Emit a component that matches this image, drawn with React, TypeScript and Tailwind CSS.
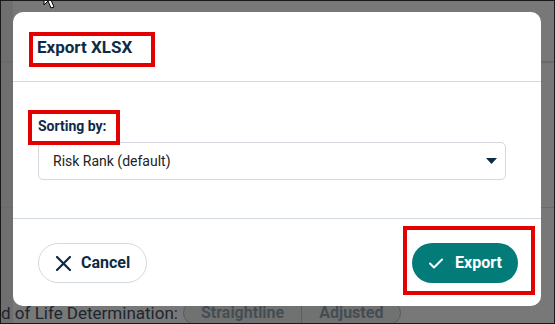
const App = () => {
  return (
    <div className="relative w-[555px] h-[324px] overflow-hidden bg-[#787878] border border-[#1a1a1a] font-['Roboto',sans-serif]">
      {/* page behind the modal, dimmed */}
      <div className="absolute left-0 top-0 w-[12px] h-full bg-[#6f6f6f]" />
      <div className="absolute left-0 right-0 top-[60px] h-[2px] bg-[#6a6a6a]" />
      <div className="absolute left-0 right-0 top-[206px] h-[1px] bg-[#6a6a6a]" />
      <div className="absolute left-0 bottom-0 flex items-center gap-[5px] h-[20px]">
        <span className="text-[17px] leading-none text-[#1c262e] whitespace-nowrap">
          d of Life Determination:
        </span>
        <div className="flex items-center h-[24px] rounded-full border border-[#56605f] bg-[#707272] text-[#454d53] font-bold text-[16px] leading-none">
          <span className="pl-[17px] pr-[17px]">Straightline</span>
          <span className="w-px h-full bg-[#56605f]" />
          <span className="px-[17px]">Adjusted</span>
        </div>
      </div>

      {/* mouse cursor */}
      <svg className="absolute left-[40px] top-[-12px]" width="18" height="22" viewBox="0 0 18 22">
        <path d="M3 1 L3 16 L7 12 L10 19 L13 18 L10 11 L15 11 Z" fill="#fff" stroke="#000" strokeWidth="1" />
      </svg>

      {/* modal */}
      <div className="absolute left-[12px] top-[11px] w-[528px] h-[294px] bg-white rounded-[10px] flex flex-col">
        <div className="relative h-[69px] px-[24px] flex items-center">
          <h2 className="text-[17px] font-bold text-[#0d2b47] pt-[3px]">Export XLSX</h2>
          <div className="absolute left-[16px] top-[20px] w-[126px] h-[35px] border-[4px] border-[#e20000]" />
        </div>
        <div className="h-px bg-[#d3d9e0]" />
        <div className="relative px-[25px] pt-[36px] h-[136px]">
          <div className="text-[14px] font-bold text-[#0d2b47] leading-[16px] mb-[8px]">Sorting by:</div>
          <div className="absolute left-[15px] top-[28px] w-[92px] h-[35px] border-[4px] border-[#e20000]" />
          <div className="flex items-center justify-between h-[38px] w-[468px] border border-[#d3d8de] rounded-[5px] pl-[14px] pr-[8px]">
            <span className="text-[14px] text-[#222]">Risk Rank (default)</span>
            <svg width="11" height="6" viewBox="0 0 11 6">
              <path d="M0 0 L11 0 L5.5 6 Z" fill="#0d2b47" />
            </svg>
          </div>
        </div>
        <div className="h-px bg-[#d3d9e0]" />
        <div className="relative flex-1 flex items-start justify-between px-[25px] pt-[24px]">
          <button className="flex items-center gap-[10px] h-[40px] w-[109px] rounded-full border border-[#d3d9e0] pl-[17px] text-[16px] font-bold text-[#0d2b47]">
            <svg width="15" height="15" viewBox="0 0 15 15">
              <path d="M1 1 L14 14 M14 1 L1 14" stroke="#0d2b47" strokeWidth="2.2" strokeLinecap="round" />
            </svg>
            Cancel
          </button>
          <button className="flex items-center gap-[12px] h-[40px] w-[106px] rounded-full bg-[#037c79] pl-[17px] text-[16px] font-bold text-white mr-[-2px]">
            <svg width="14" height="11" viewBox="0 0 14 11">
              <path d="M1 5.5 L5 9.5 L13 1.5" stroke="#fff" strokeWidth="2" fill="none" strokeLinecap="round" strokeLinejoin="round" />
            </svg>
            Export
          </button>
          <div className="absolute left-[390px] top-[7px] w-[132px] h-[69px] border-[4px] border-[#e20000]" />
        </div>
      </div>
    </div>
  );
};

export default App;
